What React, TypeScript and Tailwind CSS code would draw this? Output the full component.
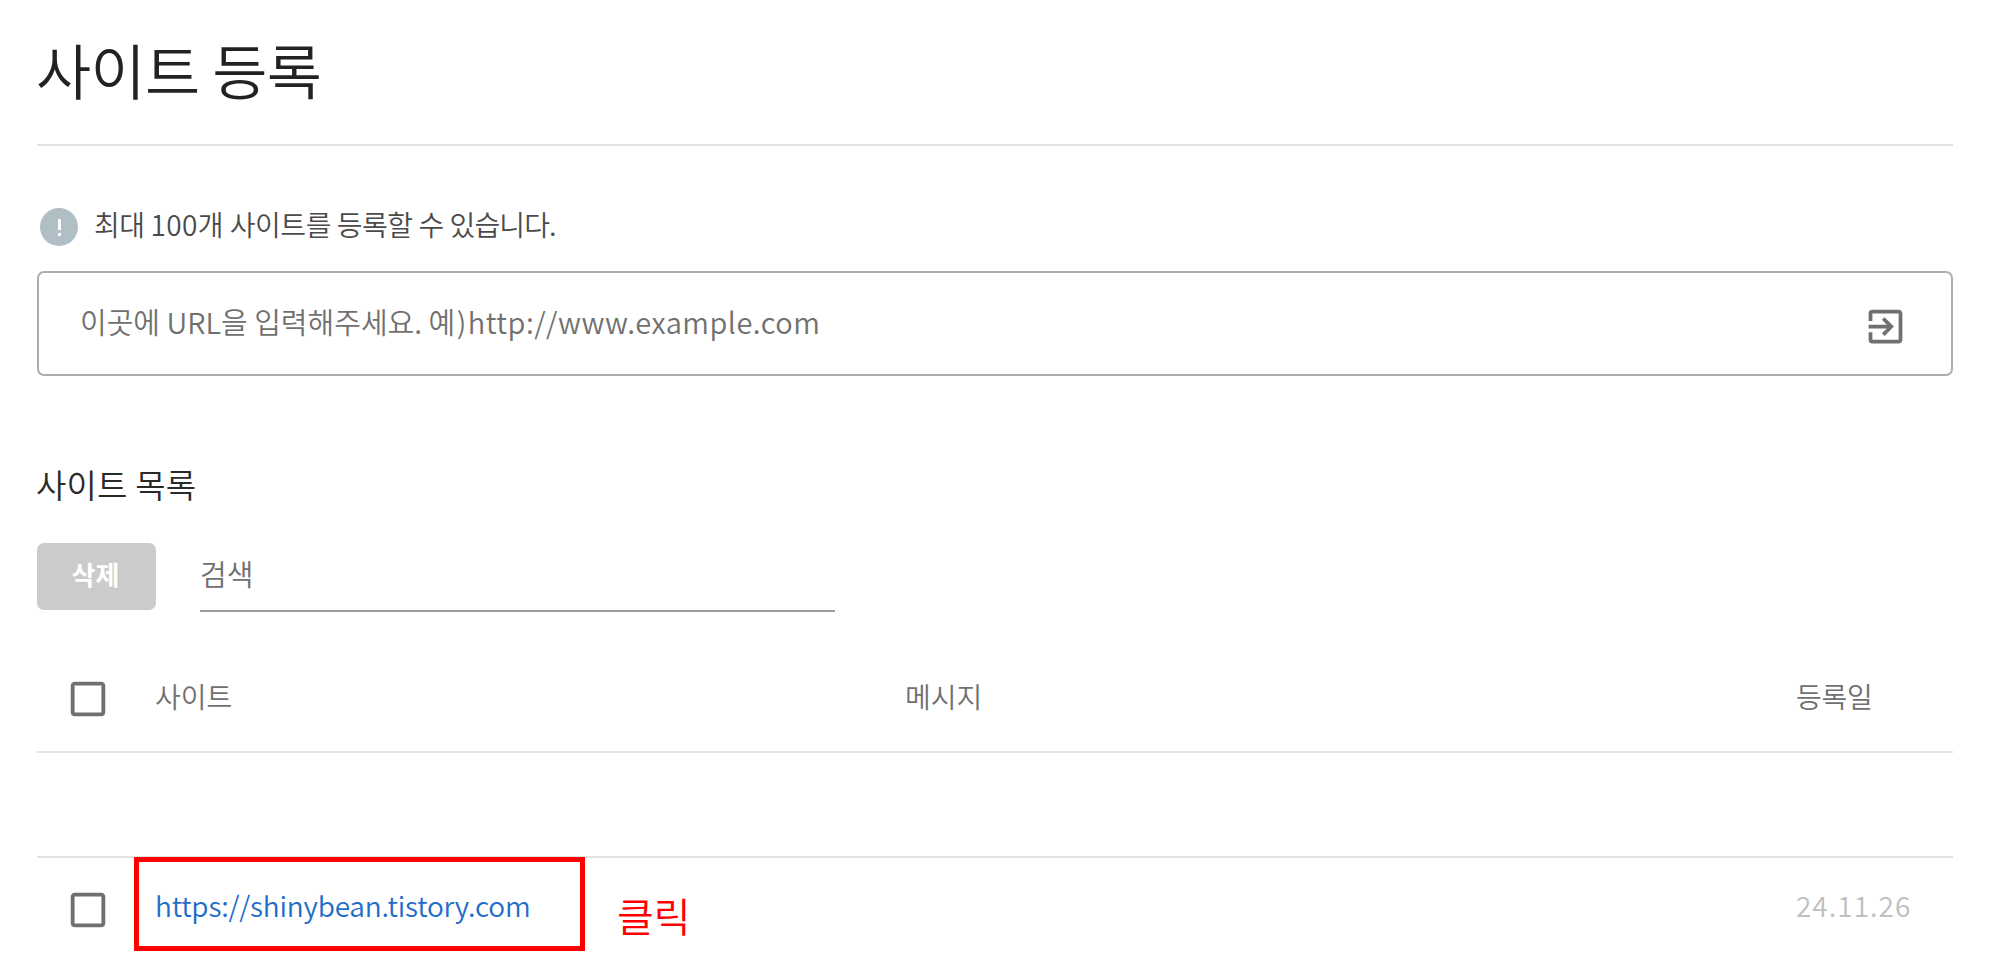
import { MdCheckBoxOutlineBlank, MdExitToApp } from "react-icons/md";

type Site = {
  url: string;
  message: string;
  createdAt: string;
};

const SITES: Site[] = [
  { url: "https://shinybean.tistory.com", message: "", createdAt: "24.11.26" },
];

function Checkbox() {
  return (
    <div className="w-[118px] shrink-0 pl-[28px]">
      <MdCheckBoxOutlineBlank className="size-[46px] text-[#707070]" />
    </div>
  );
}

export default function App() {
  return (
    <div className="h-[969px] overflow-hidden bg-white pl-[37px] pr-[47px] font-['Noto_Sans_CJK_KR',sans-serif] text-[28px] font-[350] text-[#707070]">
      <header className="flex h-[146px] items-center border-b-2 border-[#e3e3e3] pb-[7px]">
        <h1 className="-ml-px text-[60px] leading-none tracking-[-0.7px] text-[#222]">
          사이트 등록
        </h1>
      </header>

      <section className="pt-[61px]">
        <div className="flex h-[40px] items-center pl-[3px]">
          <div className="flex size-[38px] flex-col items-center justify-center gap-[3px] rounded-full bg-[#b0bec5]">
            <span className="h-[11px] w-[3px] bg-white" />
            <span className="h-[3px] w-[3px] bg-white" />
          </div>
          <p className="pb-[7px] pl-[16px] leading-none tracking-[-0.45px] text-[#4a4a4a]">
            최대 <span className="tracking-[0.4px]">100개</span> 사이트를 등록할 수{" "}
            <span className="tracking-[-0.9px]">있습니다.</span>
          </p>
        </div>
        <div className="mt-[24px] flex h-[105px] items-center justify-between rounded-[7px] border-2 border-[#adadad] pl-[41px] pr-[43px]">
          <span className="pb-[5px] text-[29px] leading-none text-[#707070]">
            이곳에 URL을 입력해주세요. <span className="tracking-[1.5px]">예)</span>
            <span className="tracking-[0.5px]">http://www.example.com</span>
          </span>
          <MdExitToApp className="mt-[5px] size-[45px] text-[#707070]" />
        </div>
      </section>

      <section className="pt-[92px]">
        <h2 className="-ml-px text-[33px] leading-[32px] tracking-[0.2px] text-[#2a2a2a]">
          사이트 목록
        </h2>
        <div className="mt-[43px] flex h-[69px] items-start">
          <button className="h-[67px] w-[119px] rounded-[7px] bg-[#cbcbcb] pb-[6px] pr-[2px] text-[26px] font-bold leading-none text-white">
            삭제
          </button>
          <div className="ml-[44px] flex h-[69px] w-[635px] items-center border-b-2 border-[#9e9e9e] pb-[6px] text-[29px] leading-none">
            검색
          </div>
        </div>

        <div className="mt-[34px] flex h-[107px] items-center border-b-2 border-[#e3e3e3] leading-none">
          <Checkbox />
          <span className="w-[750px] pb-[5px]">사이트</span>
          <span className="w-[891px] pb-[5px]">메시지</span>
          <span className="pb-[5px] tracking-[-0.2px]">등록일</span>
        </div>
        <div className="h-[105px] border-b-2 border-[#e3e3e3]" />

        {SITES.map((site) => (
          <div key={site.url} className="relative flex h-[104px] items-center leading-none">
            <Checkbox />
            <a className="w-[750px] pb-[10px] tracking-[-0.2px] text-[#1f6dca]">{site.url}</a>
            <span className="w-[891px]">{site.message}</span>
            <span className="pb-[10px] tracking-[1px] text-[#c0c0c0]">{site.createdAt}</span>
            {/* callout around the link */}
            <div className="absolute left-[97px] top-[-1px] flex h-[94px] w-[451px] items-center border-5 border-[#f00]">
              <span className="ml-[478px] mt-[22px] shrink-0 text-[40px] leading-none text-[#f00]">
                클릭
              </span>
            </div>
          </div>
        ))}
      </section>
    </div>
  );
}
